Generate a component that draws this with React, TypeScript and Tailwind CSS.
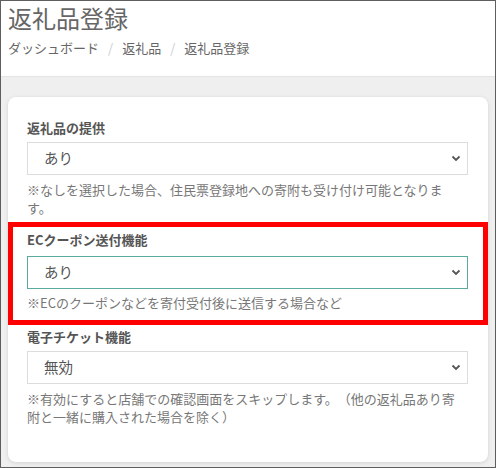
const jp = "font-['Meiryo','Noto_Sans_CJK_JP',sans-serif] [text-spacing-trim:space-all]";

function Chevron() {
  return (
    <svg width="10" height="7" viewBox="0 0 10 7" className="shrink-0">
      <path d="M1.5 1.5 L5 5 L8.5 1.5" fill="none" stroke="#555" strokeWidth="1.8" />
    </svg>
  );
}

function SelectBox({ value, focused }: { value: string; focused?: boolean }) {
  return (
    <div
      className={
        "flex h-[33px] items-center justify-between border bg-white pl-[16px] pr-[6px] " +
        (focused ? "border-[#5aab9e]" : "border-[#dcdcdc]")
      }
    >
      <span className="text-[14.5px] leading-none text-[#555]">{value}</span>
      <Chevron />
    </div>
  );
}

type FieldProps = {
  label: string;
  value: string;
  hint: string;
  focused?: boolean;
};

function Field({ label, value, hint, focused }: FieldProps) {
  return (
    <div>
      <div className="text-[13px] font-bold leading-[20px] text-[#555]">{label}</div>
      <div className="mt-[4px]">
        <SelectBox value={value} focused={focused} />
      </div>
      <p className="mt-[6px] pr-[6px] text-[13px] leading-[18px] text-[#777]">{hint}</p>
    </div>
  );
}

export default function App() {
  return (
    <div className={`${jp} flex h-[468px] w-[496px] flex-col border border-[#5e5e5e] bg-[#efefef]`}>
      <div className="h-[76px] border-b border-[#e4e4e4] bg-white px-[7px] pt-[3px]">
        <h1 className="text-[24px] font-normal leading-[28px] text-[#666]">返礼品登録</h1>
        <nav className="mt-[7px] flex items-center text-[13px] leading-[18px] text-[#666]">
          <span>ダッシュボード</span>
          <span className="px-[9px] text-[#ccc]">/</span>
          <span>返礼品</span>
          <span className="px-[9px] text-[#ccc]">/</span>
          <span>返礼品登録</span>
        </nav>
      </div>

      <div className="flex-1 px-[7px] pt-[20px]">
        <div className="rounded-[8px] bg-white pb-[36px] pl-[19px] pr-[20px] pt-[21px] shadow-[0_1px_4px_rgba(0,0,0,0.12)]">
          <Field
            label="返礼品の提供"
            value="あり"
            hint="※なしを選択した場合、住民票登録地への寄附も受け付け可能となります。"
          />

          <div className="-ml-[19px] -mr-[20px] mt-[5px] border-[5px] border-[#ff0000] pb-[8px] pl-[14px] pr-[15px] pt-[3px]">
            <div className="text-[13px] font-bold leading-[20px] text-[#555]">ECクーポン送付機能</div>
            <div className="mt-[6px]">
              <SelectBox value="あり" focused />
            </div>
            <p className="mt-[5px] text-[13px] leading-[18px] text-[#777]">
              ※ECのクーポンなどを寄付受付後に送信する場合など
            </p>
          </div>

          <div className="mt-[2px]">
            <Field
              label="電子チケット機能"
              value="無効"
              hint="※有効にすると店舗での確認画面をスキップします。（他の返礼品あり寄附と一緒に購入された場合を除く）"
            />
          </div>
        </div>
      </div>
    </div>
  );
}
